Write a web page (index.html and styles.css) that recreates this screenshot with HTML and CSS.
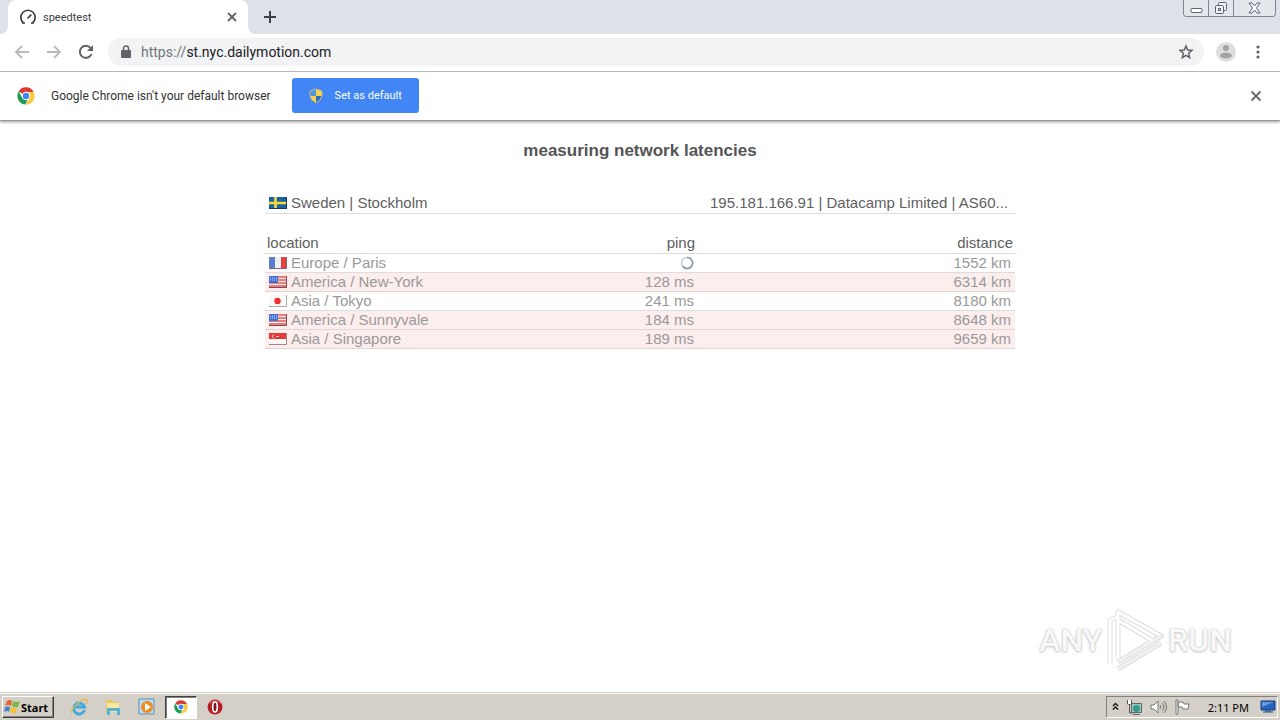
FILE: index.html
```html
<!DOCTYPE html>
<html lang="en">
<head>
<meta charset="utf-8">
<title>speedtest</title>
<link rel="stylesheet" href="styles.css">
</head>
<body>
<svg class="defs" aria-hidden="true">
  <symbol id="chrome" viewBox="0 0 18 18">
    <path d="M9 9 1.6 4.6A8.5 8.5 0 0 1 16.6 5H9z" fill="#dc3a30"/>
    <path d="M9 5h7.6A8.5 8.5 0 0 1 8.6 17.5L12.6 11z" fill="#fccb3d"/>
    <path d="M1.6 4.6 5.4 11 9 13l1.6-.3-2.2 4.8A8.5 8.5 0 0 1 1.6 4.6z" fill="#1c9c55"/>
    <circle cx="9" cy="9" r="4.2" fill="#fff"/><circle cx="9" cy="9" r="3.2" fill="#4285f4"/>
  </symbol>
  <symbol id="usa" viewBox="0 0 18 12">
    <path d="M0 0h17v11H0z" fill="#f8eeee"/>
    <path d="M0 1h17M0 4h17M0 7h17M0 10h17" stroke="#df5a5a" stroke-width="1.4"/>
    <path d="M0 0h9v7H0z" fill="#3f6fd0"/><path d="M1 2h7M1 4h7" stroke="#cfe0ff" stroke-dasharray="1 1"/>
    <path d="M0 11.500h17.500V0" fill="none" stroke="#8d4350"/>
  </symbol>
</svg>
<header>
  <div class="tabstrip">
    <div class="tab">
      <svg width="18" height="18" viewBox="0 0 18 18" fill="none" stroke="#3c4043" stroke-width="1.7"><path d="M4.400 15A7.200 7.200 0 1 1 13.600 15M3 15h3M12 15h3M8.500 10.500l3.800-3.800"/></svg>
      <span class="tab-title">speedtest</span>
      <button class="plain" aria-label="Close tab"><svg width="10" height="10" viewBox="0 0 10 10" stroke="#5f6368" stroke-width="1.8"><path d="m1 1 8 8M9 1 1 9"/></svg></button>
    </div>
    <button class="plain new-tab" aria-label="New tab"><svg width="12" height="12" viewBox="0 0 12 12" stroke="#3c4043" stroke-width="2"><path d="M6 0v12M0 6h12"/></svg></button>
    <div class="window-controls">
      <button aria-label="Minimize"><svg width="13" height="16" viewBox="0 0 13 16" fill="#fff" stroke="#5d6472"><rect x="1" y="8.500" width="11" height="4" rx="1"/></svg></button>
      <button aria-label="Restore"><svg width="14" height="16" viewBox="0 0 14 16" fill="#eef0f4" stroke="#5d6472"><rect x="4.500" y="2.500" width="8" height="8" rx="1"/><rect x="1.500" y="5.500" width="8" height="8" rx="1"/><rect x="4.500" y="8.500" width="2" height="2"/></svg></button>
      <button aria-label="Close"><svg width="13" height="16" viewBox="0 0 13 16" fill="#fff" stroke="#5d6472"><path d="M1 3h3l2.500 3L9 3h3L8.500 8l3.500 5H9l-2.500-3L4 13H1l3.500-5z"/></svg></button>
    </div>
  </div>
  <div class="toolbar">
    <button class="plain" aria-label="Back"><svg width="16" height="14" viewBox="0 0 16 14" fill="none" stroke="#b8babd" stroke-width="1.8"><path d="M15 7H2M8 1 2 7l6 6"/></svg></button>
    <button class="plain" aria-label="Forward"><svg width="16" height="14" viewBox="0 0 16 14" fill="none" stroke="#b8babd" stroke-width="1.8"><path d="M1 7h13M8 1l6 6-6 6"/></svg></button>
    <button class="plain" aria-label="Reload"><svg width="16" height="16" viewBox="0 0 16 16" fill="none" stroke="#5f6368" stroke-width="2"><path d="M13.500 10A6 6 0 1 1 12.500 4"/><path d="M15 1v6H9z" fill="#5f6368" stroke="none"/></svg></button>
    <div class="address">
      <svg width="12" height="14" viewBox="0 0 12 14"><rect x="1" y="5" width="10" height="8" rx="1" fill="#5f6368"/><path d="M3.500 6V3.500a2.500 2.500 0 0 1 5 0V6" fill="none" stroke="#5f6368" stroke-width="1.500"/></svg>
      <span class="url"><span class="scheme">https://</span>st.nyc.dailymotion.com</span>
      <button class="plain" aria-label="Bookmark"><svg width="16" height="16" viewBox="0 0 16 16" fill="none" stroke="#5f6368" stroke-width="1.500"><path d="m8 2 1.700 4 4.300.4-3.300 2.900 1 4.300L8 11.300l-3.700 2.300 1-4.300L2 6.400 6.300 6z"/></svg></button>
    </div>
    <div class="actions">
      <button class="plain" aria-label="Profile"><svg width="20" height="20" viewBox="0 0 20 20"><circle cx="10" cy="10" r="10" fill="#dedede"/><circle cx="10" cy="6" r="3" fill="#a3a3a3"/><ellipse cx="10" cy="13.500" rx="6" ry="3" fill="#a3a3a3"/></svg></button>
      <button class="plain" aria-label="Menu"><svg width="4" height="14" viewBox="0 0 4 14" fill="#5f6368"><circle cx="2" cy="2" r="1.600"/><circle cx="2" cy="7" r="1.600"/><circle cx="2" cy="12" r="1.600"/></svg></button>
    </div>
  </div>
  <div class="infobar">
    <svg width="18" height="18"><use href="#chrome"/></svg>
    <span class="info-text">Google Chrome isn't your default browser</span>
    <button class="default-button"><svg width="14" height="16" viewBox="0 0 14 16"><path d="M7 1 1 3v4q0 5 6 8z" fill="#4697df"/><path d="m7 1 6 2v4q0 5-6 8z" fill="#f7d34b"/><path d="M1 8h6v7Q2 12 1 8z" fill="#f7d34b"/><path d="M7 8h6q-1 4-6 7z" fill="#286bc4"/><path d="M7 1 1 3v4q0 5 6 8 6-3 6-8V3z" fill="none" stroke="#c9b988"/></svg>Set as default</button>
    <button class="plain dismiss" aria-label="Dismiss"><svg width="12" height="12" viewBox="0 0 12 12" stroke="#6b6e72" stroke-width="2"><path d="m1.500 1.500 9 9M10.500 1.500l-9 9"/></svg></button>
  </div>
</header>
<main>
  <h1>measuring network latencies</h1>
  <div class="client">
    <span class="place"><svg width="18" height="12" viewBox="0 0 18 12"><path d="M0 0h18v12H0z" fill="#18649e"/><path d="M0 6h18M6.500 0v12" stroke="#f7d83f" stroke-width="2.600"/><path d="M0 11.500h17.500V0" fill="none" stroke="#163c61"/></svg>Sweden | Stockholm</span>
    <span class="provider">195.181.166.91 | Datacamp Limited | AS60...</span>
  </div>
  <table>
    <thead><tr><th>location</th><th>ping</th><th>distance</th></tr></thead>
    <tbody>
      <tr><td><span class="place"><svg width="18" height="12" viewBox="0 0 18 12"><path d="M0 0h6v11H0z" fill="#587fc8"/><path d="M6 0h6v11H6z" fill="#edf0f5"/><path d="M12 0h5v11h-5z" fill="#e54343"/><path d="M0 11.500h17.500V0" fill="none" stroke="#85636a"/></svg>Europe / Paris</span></td><td><svg class="spinner" width="14" height="14" viewBox="0 0 14 14" fill="none"><circle cx="7" cy="7" r="5.500" stroke="#c6d0da" stroke-width="1.500"/><path d="M7 1.500a5.500 5.500 0 1 1-4.500 8.500" stroke="#8799aa" stroke-width="1.500"/></svg></td><td>1552 km</td></tr>
      <tr class="slow"><td><span class="place"><svg width="18" height="12"><use href="#usa"/></svg>America / New-York</span></td><td>128 ms</td><td>6314 km</td></tr>
      <tr><td><span class="place"><svg width="18" height="12" viewBox="0 0 18 12"><path d="M0 0h17v11H0z" fill="#fafafa"/><circle cx="8.500" cy="6" r="3.200" fill="#ed2f2f"/><path d="M0 11.500h17.500V0" fill="none" stroke="#aaa"/></svg>Asia / Tokyo</span></td><td>241 ms</td><td>8180 km</td></tr>
      <tr class="slow"><td><span class="place"><svg width="18" height="12"><use href="#usa"/></svg>America / Sunnyvale</span></td><td>184 ms</td><td>8648 km</td></tr>
      <tr class="slow"><td><span class="place"><svg width="18" height="12" viewBox="0 0 18 12"><path d="M0 0h17v6H0z" fill="#e53939"/><path d="M0 6h17v5H0z" fill="#fbf7f7"/><path d="M5 2a1.500 1.500 0 1 0 0 3M7 3.500h3" fill="none" stroke="#f9cccc"/><path d="M0 11.500h17.500V0" fill="none" stroke="#a88383"/></svg>Asia / Singapore</span></td><td>189 ms</td><td>9659 km</td></tr>
    </tbody>
  </table>
  <div class="watermark">
    <span>ANY</span>
    <svg width="60" height="64" viewBox="0 0 60 64" fill="none" stroke-linejoin="round"><g stroke="#dedede" stroke-width="5"><path d="M5 56V12l8-3M13 51V4l43 24-43 26M13 12l35 21M13 61l43-26"/></g><g stroke="#fff" stroke-width="3"><path d="M5 56V12l8-3M13 51V4l43 24M13 12l35 21"/></g><g stroke="#f1f1f1" stroke-width="3"><path d="m13 54 43-26M13 61l43-26"/></g></svg>
    <span>RUN</span>
  </div>
</main>
<footer>
  <button class="start"><svg width="17" height="16" viewBox="0 0 17 16"><path d="M3 2q3-2 5 0L7 7Q4 5 1 7z" fill="#e96332"/><path d="M9 2q3 2 7 0l-2 6q-3 1-6-1z" fill="#77b943"/><path d="M1 8q3-1 5 0l-1 5q-2-2-5 0z" fill="#4284ca"/><path d="M7 8q3 2 6 1l-1 5q-3 1-6-1z" fill="#f6c233"/></svg>Start</button>
  <nav class="launchers">
    <button class="plain" aria-label="Internet Explorer"><svg width="18" height="18" viewBox="0 0 18 18" fill="none"><path d="M14.500 12A5.500 5.500 0 1 1 14.500 9H5" stroke="#40a9df" stroke-width="2.800"/><path d="M2 15C-2 13 13-1 17 2q1 1-1 4" stroke="#e9bd43" stroke-width="1.300"/></svg></button>
    <button class="plain" aria-label="Explorer"><svg width="18" height="18" viewBox="0 0 18 18"><path d="M2 4V2h6l1 2h6v10H2z" fill="#e8ca66"/><path d="M3 5h12v9H3z" fill="#f8e7a0"/><path d="M3 17v-7h13v7h-3v-4H6v4z" fill="#54b2d5"/></svg></button>
    <button class="plain" aria-label="Media Player"><svg width="18" height="18" viewBox="0 0 18 18"><path d="M1 1h15v15H1z" fill="#bddcf0" stroke="#5893bd"/><circle cx="9" cy="9" r="6" fill="#f18a20"/><path d="m7 5 6 4-6 4z" fill="#fff"/></svg></button>
    <button class="plain active" aria-label="Chrome"><svg width="14" height="14"><use href="#chrome"/></svg></button>
    <button class="plain" aria-label="Opera"><svg width="18" height="18" viewBox="0 0 18 18"><circle cx="9" cy="9" r="7.500" fill="#b51c24"/><path d="M3 5q6-4 12 0" stroke="#e67777" fill="none"/><ellipse cx="9" cy="9" rx="2.300" ry="5" fill="#861018" stroke="#fff" stroke-width="1.700"/></svg></button>
  </nav>
  <div class="tray">
    <button class="plain" aria-label="Show hidden icons"><svg width="7" height="10" viewBox="0 0 8 10" fill="none" stroke="#111" stroke-width="1.600"><path d="m1 4 3-3 3 3M1 8l3-3 3 3"/></svg></button>
    <svg width="17" height="16" viewBox="0 0 17 16"><path d="M5.500 4.500h10v9h-10z" fill="#8fc9d3" stroke="#666"/><circle cx="10.500" cy="9.500" r="3.500" fill="#389b80"/><path d="M1.500 1v4h4V1M3.500 5v9h3" stroke="#555" fill="none"/><path d="M2 1h3v4H2z" fill="#fff"/><path d="M7 15.500h7" stroke="#666"/></svg>
    <svg width="17" height="16" viewBox="0 0 17 16" fill="none" stroke="#777"><path d="M1 6h3l4-4v12l-4-4H1z" fill="#fff"/><path d="M10 6q2 2 0 4M12 4q4 4 0 8M14 2q5 6 0 12"/></svg>
    <svg width="17" height="16" viewBox="0 0 17 16" fill="#fff" stroke="#777"><path d="M2 1v14h2V1zM4 3h5l1 2h5l-1 5H9L8 8H4z"/></svg>
    <time>2:11 PM</time>
    <svg width="16" height="16" viewBox="0 0 16 16"><path d="M1 2h14v9H1z" fill="#2863bc" stroke="#163f83"/><path d="M2 3h12L2 8z" fill="#629bdb"/><path d="M3 13h10M5 12h6" stroke="#234984"/></svg>
  </div>
</footer>
</body>
</html>
```
FILE: styles.css
```css
* { box-sizing: border-box; }
body {
  margin: 0;
  min-height: 100vh;
  display: flex;
  flex-direction: column;
  background: #fff;
  color: #606060;
  font-family: "Liberation Sans", sans-serif;
}
svg { display: block; flex: none; }
.defs { position: absolute; width: 0; height: 0; }
button { font: inherit; }
.plain { padding: 0; border: 0; background: none; display: flex; align-items: center; justify-content: center; }

header { font-family: Roboto, sans-serif; box-shadow: 0 1px 3px #999; border-bottom: 1px solid #999; }
.tabstrip { display: flex; height: 34px; background: #dee1e7; padding: 0 4px 0 8px; }
.tab { position: relative; width: 240px; display: flex; align-items: center; gap: 6px; padding: 0 11px; background: #fff; border-radius: 8px 8px 0 0; color: #3c4043; font-size: 11px; }
.tab::before, .tab::after { content: ""; position: absolute; bottom: 0; width: 8px; height: 8px; }
.tab::before { right: 100%; background: radial-gradient(circle at 0 0, transparent 8px, #fff 8px); }
.tab::after { left: 100%; background: radial-gradient(circle at 100% 0, transparent 8px, #fff 8px); }
.tab-title { flex: 1; }
.new-tab { margin-left: 16px; }
.window-controls { display: flex; margin-left: auto; height: 17px; border: 1px solid #7f8591; border-top: 0; border-radius: 0 0 4px 4px; overflow: hidden; }
.window-controls button { width: 25px; padding: 0; border: 0; border-right: 1px solid #7f8591; background: #e3e6eb; display: flex; justify-content: center; align-items: center; }
.window-controls button:last-child { width: 41px; border: 0; }
.toolbar { height: 38px; display: flex; align-items: center; gap: 16px; padding: 0 20px 2px 14px; border-bottom: 1px solid #b6b8ba; }
.address { flex: 1; height: 28px; display: flex; align-items: center; gap: 9px; margin: 0 -4px 0 -2px; padding: 0 10px 0 12px; border-radius: 14px; background: #f1f3f4; color: #202124; font-size: 14px; }
.url { flex: 1; }
.scheme { color: #70757a; }
.actions { display: flex; align-items: center; gap: 20px; }
.infobar { height: 48px; display: flex; align-items: center; padding: 0 18px 1px 17px; color: #333; font-size: 12px; }
.info-text { margin: 0 21px 0 16px; }
.default-button { width: 127px; height: 35px; display: flex; align-items: center; gap: 12px; padding: 0 17px; border: 0; border-radius: 3px; background: #4285f4; color: #fff; font-size: 11px; white-space: nowrap; }
.dismiss { margin-left: auto; }

main { flex: 1; display: flex; flex-direction: column; align-items: center; padding: 20px 16px 0; }
h1 { margin: 0; color: #555; font-size: 17px; line-height: 20px; font-weight: 700; }
.client { width: 100%; max-width: 750px; display: flex; justify-content: space-between; margin-top: 32px; padding: 0 7px 0 4px; border-bottom: 1px solid #ddd; font-size: 15px; line-height: 20px; }
.place { display: flex; align-items: center; gap: 4px; }
table { width: 100%; max-width: 750px; margin-top: 20px; table-layout: fixed; border-collapse: separate; border-spacing: 0; font-size: 15px; line-height: 18px; color: #999; }
th, td { padding: 0 3px 0 4px; border-bottom: 1px solid #ddd; text-align: right; }
th { padding: 0 2px 1px; font-weight: 400; color: #606060; }
th:first-child, td:first-child { text-align: left; }
th:nth-child(2) { width: 114px; }
td:last-child { padding-right: 4px; }
.slow td { background: #fdeeee; border-color: #e2d4d4; }
.spinner { margin-left: auto; }
.watermark { display: flex; align-items: center; gap: 3px; align-self: flex-end; margin: auto 32px 20px 0; color: #f8f8f8; font: 500 32px/64px Roboto, sans-serif; text-shadow: 0 0 2px #bbb, 0 1px 3px #ccc; }

footer { height: 28px; display: flex; align-items: center; padding: 1px 2px 0; border-top: 1px solid #d4d0c8; box-shadow: inset 0 1px #fff; background: #d4d0c8; color: #000; font-family: "Noto Sans", sans-serif; font-size: 11px; }
.start { width: 52px; height: 22px; display: flex; align-items: center; padding: 0 1px; border: 1px solid; border-color: #fff #404040 #404040 #fff; box-shadow: inset -1px -1px #808080; background: #d4d0c8; font-weight: 700; }
.launchers { display: flex; margin-left: 8px; }
.launchers button { width: 34px; height: 23px; }
.launchers .active { width: 32px; margin: 0 1px; background: #fff; border: 1px solid; border-color: #404040 #fff #fff #404040; box-shadow: inset 1px 1px #808080; }
.tray { display: flex; align-items: center; gap: 7px; height: 22px; margin-left: auto; padding: 0 1px 0 5px; border: 1px solid; border-color: #808080 #fff #fff #808080; }
time { margin: 0 4px 0 10px; }
```
